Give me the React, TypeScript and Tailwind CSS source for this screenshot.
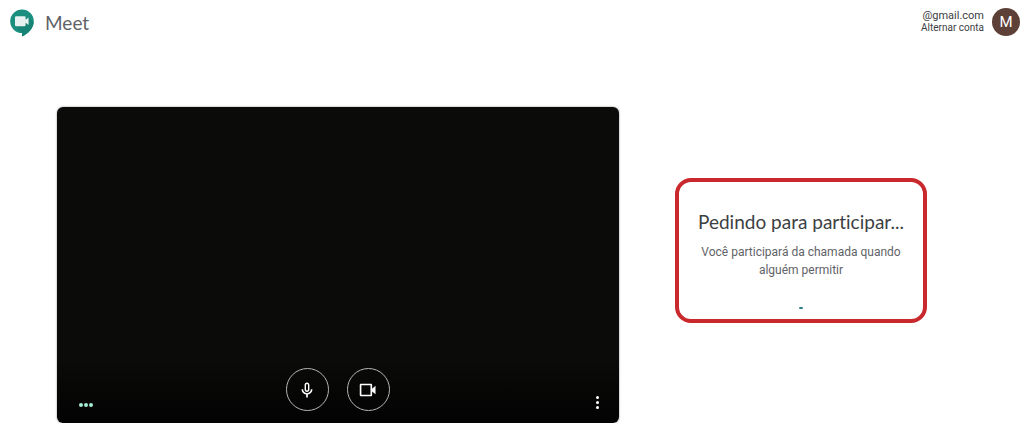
function MeetLogo() {
  return (
    <svg viewBox="0 0 24 28" className="h-7 w-6" aria-hidden="true">
      <path d="M12 0.5a11.8 11.8 0 0 0 0 23.6v3.4C18.5 24.6 23.8 19 23.8 12.3A11.8 11.8 0 0 0 12 0.5z" fill="#1a8f80" />
      <path d="M18.5 8l5.2 5.4c-.6 6-5.6 11.4-11.7 14.1v-3.4L5.5 17z" fill="#178475" />
      <path d="M6.2 7.3h8.2a1.2 1.2 0 0 1 1.2 1.2v2.3l3-2.3v7.6l-3-2.3v2.3a1.2 1.2 0 0 1-1.2 1.2H6.2a1.2 1.2 0 0 1-1.2-1.2V8.5a1.2 1.2 0 0 1 1.2-1.2z" fill="#e6f1f0" />
    </svg>
  );
}

function MicIcon() {
  return (
    <svg viewBox="0 0 24 24" className="size-[18px]" fill="currentColor" aria-hidden="true">
      <path d="M12 14.5c1.9 0 3.2-1.4 3.2-3.2V5.2C15.2 3.4 13.9 2 12 2S8.800 3.400 8.800 5.200v6.100c0 1.800 1.300 3.200 3.200 3.200zM10.700 5.200c0-.8.5-1.300 1.300-1.300s1.300.5 1.300 1.300v6.100c0 .8-.5 1.300-1.300 1.300s-1.300-.5-1.300-1.300V5.200zM17.200 11c0 3-2.400 5.200-5.200 5.200S6.800 14 6.800 11H4.700c0 3.600 2.700 6.600 6.200 7.100V22h2.200v-3.900c3.500-.5 6.200-3.500 6.200-7.100h-2.100z" />
    </svg>
  );
}

function CameraIcon() {
  return (
    <svg viewBox="0 0 24 24" className="size-[22px]" fill="currentColor" aria-hidden="true">
      <path d="M16.500 10.500V6.500c0-.9-.5-1.400-1.400-1.400H4.400C3.500 5.100 3 5.600 3 6.500v11c0 .9.500 1.400 1.400 1.400h10.700c.9 0 1.400-.5 1.400-1.400v-4l3.700 3.200V7.300l-3.700 3.200zM14.700 17.100H4.800V6.900h9.900v10.200z" />
    </svg>
  );
}

const controls = [
  { label: "Desativar microfone", icon: <MicIcon /> },
  { label: "Desativar câmera", icon: <CameraIcon /> },
];

function Header() {
  return (
    <header className="flex items-start justify-between pt-2 pr-1 pl-[10px]">
      <div className="flex items-center gap-[11px] pt-px">
        <MeetLogo />
        <span className="font-[Lato,sans-serif] text-[19px] leading-7 text-[#5f6368]">Meet</span>
      </div>
      <div className="flex items-center gap-2">
        <div className="text-right leading-3 text-[#3c4043]">
          <p className="text-[11px]">@gmail.com</p>
          <a href="#" className="block text-[10px]">
            Alternar conta
          </a>
        </div>
        <button
          type="button"
          aria-label="Conta"
          className="flex size-7 items-center justify-center rounded-full bg-[#5d4037] text-[15px] text-white"
        >
          M
        </button>
      </div>
    </header>
  );
}

function VideoPreview() {
  return (
    <section className="flex aspect-video flex-1 flex-col justify-end rounded-md bg-linear-to-b from-[#0b0b09] from-80% to-[#030303] px-4 pb-3 shadow-[0_0_2px_rgba(0,0,0,0.5)]">
      <div className="grid grid-cols-3 items-end">
        <div className="flex gap-px pb-1 pl-[6px]">
          <span className="size-1 rounded-full bg-[#a5ecd4]" />
          <span className="size-1 rounded-full bg-[#a5ecd4]" />
          <span className="size-1 rounded-full bg-[#a5ecd4]" />
        </div>
        <div className="flex justify-center gap-[18px]">
          {controls.map((control) => (
            <button
              key={control.label}
              type="button"
              aria-label={control.label}
              className="flex size-[43px] shrink-0 items-center justify-center rounded-full border border-[#b5b5b5] text-white"
            >
              {control.icon}
            </button>
          ))}
        </div>
        <button
          type="button"
          aria-label="Mais opções"
          className="flex w-3 flex-col items-center gap-[2px] justify-self-end pb-[2px]"
        >
          <span className="size-[3px] rounded-full bg-white" />
          <span className="size-[3px] rounded-full bg-white" />
          <span className="size-[3px] rounded-full bg-white" />
        </button>
      </div>
    </section>
  );
}

function JoinStatus() {
  return (
    <section className="mt-[71px] flex w-[252px] shrink-0 flex-col items-center rounded-2xl border-4 border-[#c9282d] px-4 pt-7 pb-[10px] text-center">
      <h1 className="font-[Lato,sans-serif] text-[19px] leading-6 whitespace-nowrap text-[#3c4043] [font-variant-ligatures:none]">
        Pedindo para participar...
      </h1>
      <p className="mt-[9px] text-[12px] leading-[18px] text-[#5f6368]">
        Você participará da chamada quando alguém permitir
      </p>
      <span role="status" aria-label="Carregando" className="mt-7 h-[2px] w-1 rounded-full bg-[#2f7f86]" />
    </section>
  );
}

export default function App() {
  return (
    <div className="bg-white font-[Roboto,sans-serif]">
      <Header />
      <main className="flex items-start gap-14 pt-[70px] pr-[97px] pl-[57px]">
        <VideoPreview />
        <JoinStatus />
      </main>
    </div>
  );
}
